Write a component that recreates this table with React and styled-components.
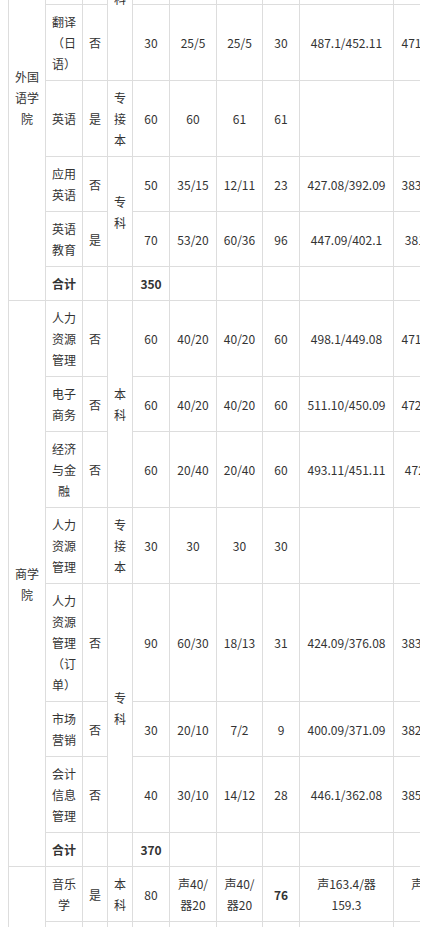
import styled, { createGlobalStyle } from 'styled-components'

const GlobalStyle = createGlobalStyle`
  body {
    margin: 0;
    background: #fff;
    color: #333;
    font-family: "Noto Sans CJK SC", "Noto Sans", sans-serif;
  }
`

const Page = styled.div`
  padding: 0 8px;
`

const TableScroll = styled.div`
  width: 412px;
  overflow: hidden;
`

const Table = styled.table`
  border-collapse: collapse;
  table-layout: fixed;
  width: 480px;
  margin-top: -106px;
  font-size: 12px;
  line-height: 21px;
`

const Col = styled.col`
  width: ${({ $w }) => $w}px;
`

const Cell = styled.td`
  border: 1px solid #ddd;
  padding: 6px;
  text-align: center;
  vertical-align: middle;
  font-weight: ${({ $bold }) => ($bold ? 700 : 400)};
`

const widths = [37, 37, 25, 25, 37, 47, 46, 37, 94, 94]

// rows above the fold are scrolled out of view
const rows = [
  [{ t: '外国语学院', rs: 7 }, { t: '商务英语' }, { t: '否' }, { t: '本科', rs: 3 }, { t: '40' }, { t: '30/10' }, { t: '30/10' }, { t: '40' }, { t: '480.1/445.09' }, { t: '468.09/430.10' }],
  [{ t: '应用日语' }, { t: '否' }, { t: '30' }, { t: '25/5' }, { t: '25/5' }, { t: '30' }, { t: '476.1/440.08' }, { t: '465.10/428.09' }],
  [{ t: '翻译（日语）' }, { t: '否' }, { t: '30' }, { t: '25/5' }, { t: '25/5' }, { t: '30' }, { t: '487.1/452.11' }, { t: '471.10/436.09' }],
  [{ t: '英语' }, { t: '是' }, { t: '专接本' }, { t: '60' }, { t: '60' }, { t: '61' }, { t: '61' }, { t: '' }, { t: '' }],
  [{ t: '应用英语' }, { t: '否' }, { t: '专科', rs: 2 }, { t: '50' }, { t: '35/15' }, { t: '12/11' }, { t: '23' }, { t: '427.08/392.09' }, { t: '383.09/352.08' }],
  [{ t: '英语教育' }, { t: '是' }, { t: '70' }, { t: '53/20' }, { t: '60/36' }, { t: '96' }, { t: '447.09/402.1' }, { t: '381.1/352.08' }],
  [{ t: '合计', b: true }, { t: '' }, { t: '' }, { t: '350', b: true }, { t: '' }, { t: '' }, { t: '' }, { t: '' }, { t: '' }],
  [{ t: '商学院', rs: 8 }, { t: '人力资源管理' }, { t: '否' }, { t: '本科', rs: 3 }, { t: '60' }, { t: '40/20' }, { t: '40/20' }, { t: '60' }, { t: '498.1/449.08' }, { t: '471.09/430.10' }],
  [{ t: '电子商务' }, { t: '否' }, { t: '60' }, { t: '40/20' }, { t: '40/20' }, { t: '60' }, { t: '511.10/450.09' }, { t: '472.10/431.09' }],
  [{ t: '经济与金融' }, { t: '否' }, { t: '60' }, { t: '20/40' }, { t: '20/40' }, { t: '60' }, { t: '493.11/451.11' }, { t: '472.1/433.08' }],
  [{ t: '人力资源管理' }, { t: '' }, { t: '专接本' }, { t: '30' }, { t: '30' }, { t: '30' }, { t: '30' }, { t: '' }, { t: '' }],
  [{ t: '人力资源管理（订单）' }, { t: '否' }, { t: '专科', rs: 3 }, { t: '90' }, { t: '60/30' }, { t: '18/13' }, { t: '31' }, { t: '424.09/376.08' }, { t: '383.09/356.08' }],
  [{ t: '市场营销' }, { t: '否' }, { t: '30' }, { t: '20/10' }, { t: '7/2' }, { t: '9' }, { t: '400.09/371.09' }, { t: '382.08/350.09' }],
  [{ t: '会计信息管理' }, { t: '否' }, { t: '40' }, { t: '30/10' }, { t: '14/12' }, { t: '28' }, { t: '446.1/362.08' }, { t: '385.10/351.08' }],
  [{ t: '合计', b: true }, { t: '' }, { t: '' }, { t: '370', b: true }, { t: '' }, { t: '' }, { t: '' }, { t: '' }, { t: '' }],
  [{ t: '艺术学院', rs: 3 }, { t: '音乐学' }, { t: '是' }, { t: '本科' }, { t: '80' }, { t: '声40/器20' }, { t: '声40/器20' }, { t: '76', b: true }, { t: <>声163.4/器<br />159.3</> }, { t: <>声160.2/器<br />155.4</> }],
  [{ t: '音乐表演' }, { t: '是' }, { t: '本科' }, { t: '60' }, { t: '声30/器30' }, { t: '声30/器30' }, { t: '60' }, { t: <>声170.2/器<br />162.1</> }, { t: <>声165.1/器<br />158.2</> }],
  [{ t: '舞蹈学' }, { t: '是' }, { t: '本科' }, { t: '40' }, { t: '40' }, { t: '40' }, { t: '40' }, { t: '168.1' }, { t: '160.3' }],
]

export default function App() {
  return (
    <Page>
      <GlobalStyle />
      <TableScroll>
        <Table>
          <colgroup>
            {widths.map((w, i) => (
              <Col key={i} $w={w} />
            ))}
          </colgroup>
          <tbody>
            {rows.map((row, r) => (
              <tr key={r}>
                {row.map((c, i) => (
                  <Cell key={i} rowSpan={c.rs} $bold={c.b}>
                    {c.t}
                  </Cell>
                ))}
              </tr>
            ))}
          </tbody>
        </Table>
      </TableScroll>
    </Page>
  )
}
